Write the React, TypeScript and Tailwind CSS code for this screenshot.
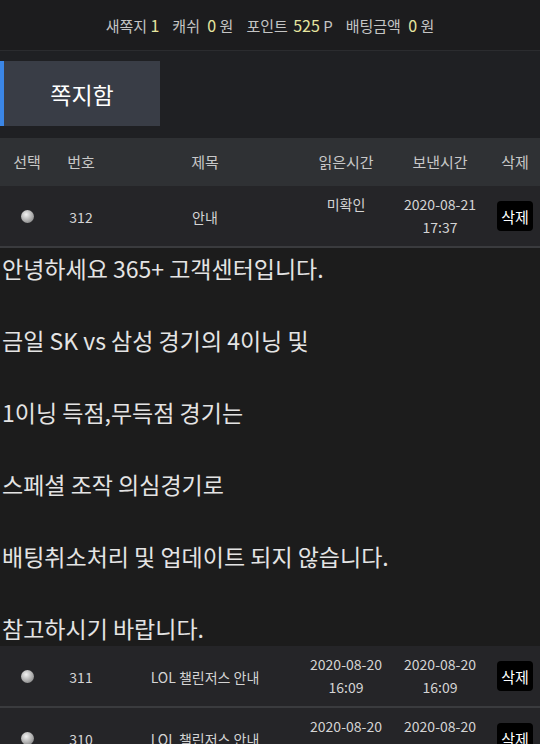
import React from 'react';

interface Message {
  id: number;
  title: string;
  readAt: string[];
  sentAt: string[];
}

const messages: Message[] = [
  { id: 312, title: '안내', readAt: ['미확인'], sentAt: ['2020-08-21', '17:37'] },
  { id: 311, title: 'LOL 챌린저스 안내', readAt: ['2020-08-20', '16:09'], sentAt: ['2020-08-20', '16:09'] },
  { id: 310, title: 'LOL 챌린저스 안내', readAt: ['2020-08-20', '16:09'], sentAt: ['2020-08-20', '16:09'] },
];

const body = [
  '안녕하세요 365+ 고객센터입니다.',
  '금일 SK vs 삼성 경기의 4이닝 및',
  '1이닝 득점,무득점 경기는',
  '스페셜 조작 의심경기로',
  '배팅취소처리 및 업데이트 되지 않습니다.',
  '참고하시기 바랍니다.',
];

const cols = 'grid grid-cols-[54px_54px_194px_88px_100px_50px]';

function Radio() {
  return (
    <span className="block w-[13px] h-[13px] rounded-full bg-[radial-gradient(circle_at_40%_35%,#f2f2f2_0%,#b8b8b8_45%,#6e6e6e_100%)]" />
  );
}

function Row({ m }: { m: Message }) {
  const single = m.readAt.length === 1;
  return (
    <div className={`${cols} h-[62px] bg-[#252528] border-b-2 border-[#3a3b3e] text-[14px] text-[#d4d4d4] leading-[23px]`}>
      <div className="flex items-center justify-center">
        <Radio />
      </div>
      <div className="flex items-center justify-center pt-[2px]">{m.id}</div>
      <div className="flex items-center justify-center pt-[2px]">{m.title}</div>
      <div className={`flex flex-col items-center ${single ? 'justify-start pt-[7px]' : 'justify-center'}`}>
        {m.readAt.map((t) => (
          <span key={t}>{t}</span>
        ))}
      </div>
      <div className="flex flex-col items-center justify-center">
        {m.sentAt.map((t) => (
          <span key={t}>{t}</span>
        ))}
      </div>
      <div className="flex items-center justify-center">
        <button className="bg-black text-white rounded-[4px] w-[36px] h-[30px] text-[15px] leading-none">삭제</button>
      </div>
    </div>
  );
}

export default function App() {
  return (
    <div className="w-[540px] h-[744px] overflow-hidden bg-[#1c1c1c] font-['Noto_Sans_CJK_KR','Noto_Sans',sans-serif]">
      {/* 상단 정보 */}
      <div className="h-[51px] bg-[#1c1c1e] border-b border-[#2b2c2f] flex items-center justify-center text-[15px] text-[#c4c4c4] gap-[13px]">
        <span>새쪽지 <span className="text-[#e6e6a0] text-[16px]">1</span></span>
        <span>캐쉬 <span className="text-[#e6e6a0] text-[16px] ml-1">0</span> 원</span>
        <span>포인트 <span className="text-[#e6e6a0] text-[16px] ml-0.5">525</span> P</span>
        <span>배팅금액 <span className="text-[#e6e6a0] text-[16px] ml-1">0</span> 원</span>
      </div>

      <div className="h-[87px] bg-[#1f2023] pt-[10px]">
        <div className="w-[160px] h-[65px] bg-[#393d46] border-l-4 border-[#3b86e6] flex items-center justify-center text-[23px] text-white pt-[2px]">
          쪽지함
        </div>
      </div>

      {/* 헤더 */}
      <div className={`${cols} h-[48px] bg-[#2f3134] text-[15px] text-[#c8c8c8]`}>
        {['선택', '번호', '제목', '읽은시간', '보낸시간', '삭제'].map((h) => (
          <div key={h} className="flex items-center justify-center">{h}</div>
        ))}
      </div>

      <Row m={messages[0]} />

      <div className="bg-[#1c1c1c] pl-[2px] pt-[2px] text-[23px] leading-[36px] text-[#e4e4e4]">
        {body.map((line, i) => (
          <div key={i}>
            {i > 0 && <div className="h-[36px]" />}
            <div>{line}</div>
          </div>
        ))}
      </div>

      <Row m={messages[1]} />
      <Row m={messages[2]} />
    </div>
  );
}
